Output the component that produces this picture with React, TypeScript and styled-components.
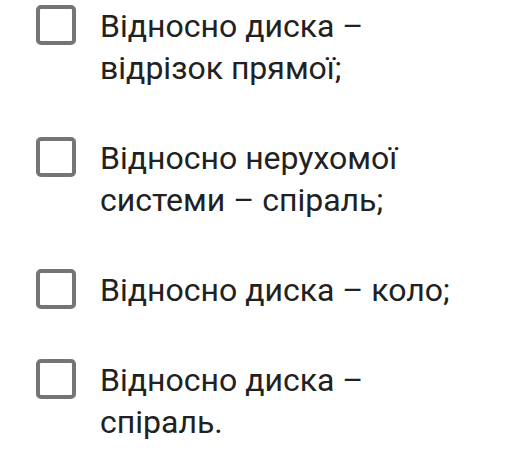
import React from "react";
import styled, { createGlobalStyle } from "styled-components";

const GlobalStyle = createGlobalStyle`
  html, body {
    margin: 0;
    padding: 0;
    background: #ffffff;
  }
  body {
    font-family: Roboto, "Noto Sans", sans-serif;
  }
`;

const List = styled.div`
  display: flex;
  flex-direction: column;
  gap: 48px;
  padding: 5px 0 0 36px;
`;

const Option = styled.label`
  display: flex;
  align-items: flex-start;
  gap: 24px;
  cursor: pointer;
`;

const Box = styled.span`
  flex: none;
  box-sizing: border-box;
  width: 40px;
  height: 40px;
  border: 4px solid #757575;
  border-radius: 5px;
  background: #ffffff;
`;

const Text = styled.span`
  width: 380px;
  font-family: Roboto, sans-serif;
  font-size: 32px;
  line-height: 42px;
  color: #212121;
`;

const options = [
  "Відносно диска – відрізок прямої;",
  "Відносно нерухомої системи – спіраль;",
  "Відносно диска – коло;",
  "Відносно диска – спіраль.",
];

export default function App() {
  return (
    <>
      <GlobalStyle />
      <List>
        {options.map((t) => (
          <Option key={t}>
            <Box />
            <Text>{t}</Text>
          </Option>
        ))}
      </List>
    </>
  );
}
